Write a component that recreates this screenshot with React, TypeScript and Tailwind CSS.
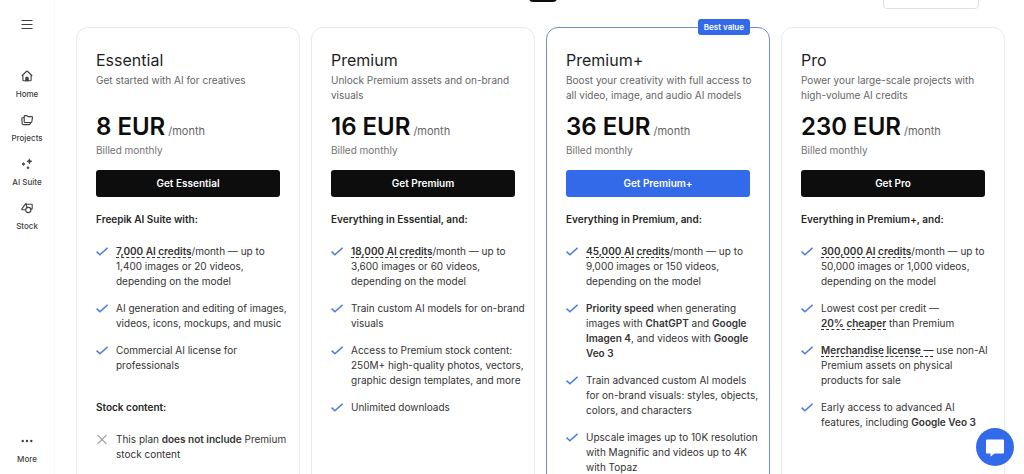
import type { ReactNode } from "react";

type Section = {
  heading: string;
  items: { text: ReactNode; included?: boolean }[];
};

type Plan = {
  name: string;
  description: string;
  price: string;
  best?: boolean;
  sections: Section[];
};

const Term = ({ children }: { children: ReactNode }) => (
  <strong className="font-semibold underline decoration-dashed decoration-1 underline-offset-2 [text-decoration-skip-ink:none]">
    {children}
  </strong>
);

const B = ({ children }: { children: ReactNode }) => (
  <strong className="font-semibold">{children}</strong>
);

const PLANS: Plan[] = [
  {
    name: "Essential",
    description: "Get started with AI for creatives",
    price: "8 EUR",
    sections: [
      {
        heading: "Freepik AI Suite with:",
        items: [
          { text: <><Term>7,000 AI credits</Term>/month — up to 1,400 images or 20 videos, depending on the model</> },
          { text: "AI generation and editing of images, videos, icons, mockups, and music" },
          { text: "Commercial AI license for professionals" },
        ],
      },
      {
        heading: "Stock content:",
        items: [{ text: <>This plan <B>does not include</B> Premium stock content</>, included: false }],
      },
    ],
  },
  {
    name: "Premium",
    description: "Unlock Premium assets and on-brand visuals",
    price: "16 EUR",
    sections: [
      {
        heading: "Everything in Essential, and:",
        items: [
          { text: <><Term>18,000 AI credits</Term>/month — up to 3,600 images or 60 videos, depending on the model</> },
          { text: "Train custom AI models for on-brand visuals" },
          { text: "Access to Premium stock content: 250M+ high-quality photos, vectors, graphic design templates, and more" },
          { text: "Unlimited downloads" },
        ],
      },
    ],
  },
  {
    name: "Premium+",
    description: "Boost your creativity with full access to all video, image, and audio AI models",
    price: "36 EUR",
    best: true,
    sections: [
      {
        heading: "Everything in Premium, and:",
        items: [
          { text: <><Term>45,000 AI credits</Term>/month — up to 9,000 images or 150 videos, depending on the model</> },
          { text: <><B>Priority speed</B> when generating images with <B>ChatGPT</B> and <B>Google Imagen 4</B>, and videos with <B>Google Veo 3</B></> },
          { text: "Train advanced custom AI models for on-brand visuals: styles, objects, colors, and characters" },
          { text: "Upscale images up to 10K resolution with Magnific and videos up to 4K with Topaz" },
        ],
      },
    ],
  },
  {
    name: "Pro",
    description: "Power your large-scale projects with high-volume AI credits",
    price: "230 EUR",
    sections: [
      {
        heading: "Everything in Premium+, and:",
        items: [
          { text: <><Term>300,000 AI credits</Term>/month — up to 50,000 images or 1,000 videos, depending on the model</> },
          { text: <>Lowest cost per credit — <br /><Term>20% cheaper</Term> than Premium</> },
          { text: <><Term>Merchandise license —</Term> use non-AI Premium assets on physical products for sale</> },
          { text: <>Early access to advanced AI features, including <B>Google Veo 3</B></> },
        ],
      },
    ],
  },
];

const NAV: { label: string; icon: ReactNode }[] = [
  {
    label: "Home",
    icon: (
      <>
        <path d="M.8 6L5.300 1.500a1 1 0 0 1 1.400 0L11.200 6M1.900 5.400v4.700c0 .4.3.7.7.7h6.800c.4 0 .7-.3.7-.7V5.400" />
        <path d="M4.800 10.800V8.200a1.200 1.200 0 0 1 2.400 0v2.600z" fill="currentColor" />
      </>
    ),
  },
  {
    label: "Projects",
    icon: (
      <>
        <path d="M3.900 1.600h2l1 1h3.900c.5 0 .8.300.7.800l-.7 4.400c-.1.400-.400.700-.8.700H4c-.5 0-.8-.300-.8-.8V2.300c0-.4.300-.7.7-.7z" />
        <path d="M3.200 3.800H1.700c-.600 0-.9.300-.9.8l.4 5c.1.600.400 1 1 1h6c.600 0 .9-.300 1.100-.8l.4-1.200" />
      </>
    ),
  },
  {
    label: "AI Suite",
    icon: (
      <g fill="currentColor" strokeWidth="0.8">
        <path d="M8.400.8c.3 1.600.9 2.200 2.500 2.500-1.600.3-2.200.9-2.500 2.500-.3-1.600-.9-2.200-2.500-2.500 1.600-.3 2.200-.9 2.500-2.500z" />
        <path d="M2.500 4.600c.2.900.6 1.300 1.500 1.500-.9.200-1.300.6-1.500 1.500-.2-.9-.6-1.300-1.500-1.500.9-.2 1.300-.6 1.500-1.500z" />
        <path d="M7 8.600c.2.700.5 1 1.200 1.200-.7.200-1 .5-1.200 1.200-.2-.7-.5-1-1.200-1.200.7-.2 1-.5 1.200-1.200z" />
      </g>
    ),
  },
  {
    label: "Stock",
    icon: (
      <>
        <path d="M5.400 4.200V2.200c0-.6-.6-.8-.9-.3L.900 6.900c-.3.400 0 .8.400.8h3.300" />
        <path d="M5.400 2.200h5.200c.400 0 .6.300.6.600v3.600c0 .4-.200.700-.6.700H10M5.400 4.200l1.200 1.500" />
        <circle cx="7.300" cy="8" r="2.600" />
      </>
    ),
  },
];

function Mark({ included }: { included: boolean }) {
  return (
    <svg
      viewBox="0 0 12 15"
      fill="none"
      aria-hidden="true"
      className={`h-[15px] w-3 shrink-0 ${included ? "text-[#4a7de0]" : "text-[#a3a3a3]"}`}
    >
      <path
        d={included ? "M.6 7.600l3.300 3.200L11.600 3.800" : "M1.500 3l9 9M10.500 3l-9 9"}
        stroke="currentColor"
        strokeWidth={included ? 1.5 : 1.1}
      />
    </svg>
  );
}

function PlanCard({ plan }: { plan: Plan }) {
  return (
    <article
      className={`relative rounded-[12px] border px-[19px] pt-5 pb-10 ${plan.best ? "border-[#6f8fc4]" : "border-[#e8eaee]"}`}
    >
      {plan.best && (
        <span className="absolute -top-[9px] right-[19px] rounded-[3px] bg-[#336aea] px-[6px] text-[8px] leading-4 font-semibold text-white">
          Best value
        </span>
      )}
      <h2 className="text-[16px] leading-6 text-[#1f1f1f]">{plan.name}</h2>
      <p className="mt-px -mr-[10px] min-h-[30px] text-[10px] leading-[15px] text-[#666]">{plan.description}</p>
      <p className="mt-[10px] flex h-7 items-baseline gap-[3px]">
        <span className="text-[24px] leading-7 font-semibold text-[#0d0d0d]">{plan.price}</span>
        <span className="text-[11px] leading-none text-[#666]">/month</span>
      </p>
      <p className="mt-[2px] text-[10px] leading-[15px] text-[#737373]">Billed monthly</p>
      <button
        type="button"
        className={`mt-3 block h-[27px] w-full rounded-[3px] text-[10px] font-semibold text-white ${plan.best ? "bg-[#336aea]" : "bg-[#0d0d0d]"}`}
      >
        Get {plan.name}
      </button>
      {plan.sections.map((s, i) => (
        <section key={s.heading} className={i === 0 ? "mt-[15px]" : "mt-[27px]"}>
          <h3 className="text-[10px] leading-[15px] font-semibold text-[#262626]">{s.heading}</h3>
          <ul className="mt-[17px] -mr-[10px] flex flex-col gap-3">
            {s.items.map((item, n) => (
              <li key={n} className="flex gap-2 text-[10px] leading-[15px] text-[#333]">
                <Mark included={item.included !== false} />
                <span>{item.text}</span>
              </li>
            ))}
          </ul>
        </section>
      ))}
    </article>
  );
}

function Sidebar() {
  return (
    <aside className="flex w-[55px] shrink-0 flex-col items-center border-r border-[#fafafa] pt-[18px] pb-[9px] text-[#404040]">
      <button type="button" aria-label="Menu" className="h-[13px]">
        <svg width="12" height="13" viewBox="0 0 12 13" stroke="currentColor" strokeWidth="1">
          <path d="M.5 2.500h11M.5 6.500h11M.5 10.500h11" />
        </svg>
      </button>
      <nav className="mt-[39px] flex flex-col gap-[14px]">
        {NAV.map((n) => (
          <a key={n.label} href="#" className="flex flex-col items-center gap-[7px] text-[8px] leading-[11px] font-medium">
            <svg width="12" height="12" viewBox="0 0 12 12" fill="none" stroke="currentColor" strokeWidth="1.1" strokeLinejoin="round" aria-hidden="true">
              {n.icon}
            </svg>
            {n.label}
          </a>
        ))}
      </nav>
      <button type="button" className="mt-auto flex flex-col items-center gap-[7px] text-[8px] leading-[11px] font-medium">
        <svg width="12" height="12" viewBox="0 0 12 12" fill="currentColor" aria-hidden="true">
          <circle cx="1.700" cy="6" r="1.200" />
          <circle cx="6" cy="6" r="1.200" />
          <circle cx="10.300" cy="6" r="1.200" />
        </svg>
        More
      </button>
    </aside>
  );
}

export default function App() {
  return (
    <div className="flex h-screen overflow-hidden bg-white font-['Inter',sans-serif]">
      <Sidebar />
      <main className="min-w-0 flex-1 overflow-hidden pr-[19px] pl-[21px]">
        {/* billing toggle and currency picker, scrolled mostly out of view */}
        <div className="grid grid-cols-[1fr_auto_1fr] grid-rows-[9px] items-end overflow-hidden">
          <button
            type="button"
            aria-label="Billing period"
            className="col-start-2 mb-[7px] ml-1 h-4 w-7 rounded-[4px] bg-[#0d0d0d]"
          />
          <select
            aria-label="Currency"
            className="mr-[26px] h-7 w-24 appearance-none justify-self-end rounded-[4px] border border-[#e0e0e0] bg-white"
          />
        </div>
        <div className="mt-[18px] grid grid-cols-4 gap-[11px]">
          {PLANS.map((p) => (
            <PlanCard key={p.name} plan={p} />
          ))}
        </div>
      </main>
      <button
        type="button"
        aria-label="Open chat"
        className="fixed right-[10px] bottom-2 grid h-[38px] w-[38px] place-items-center rounded-full bg-[#336aea]"
      >
        <svg width="20" height="20" viewBox="0 0 20 20" fill="#fff" aria-hidden="true">
          <path d="M2 2.500h16a1 1 0 0 1 1 1v12a1 1 0 0 1-1 1h-8.500L5.500 19.800v-3.300H2a1 1 0 0 1-1-1v-12a1 1 0 0 1 1-1z" />
        </svg>
      </button>
    </div>
  );
}
